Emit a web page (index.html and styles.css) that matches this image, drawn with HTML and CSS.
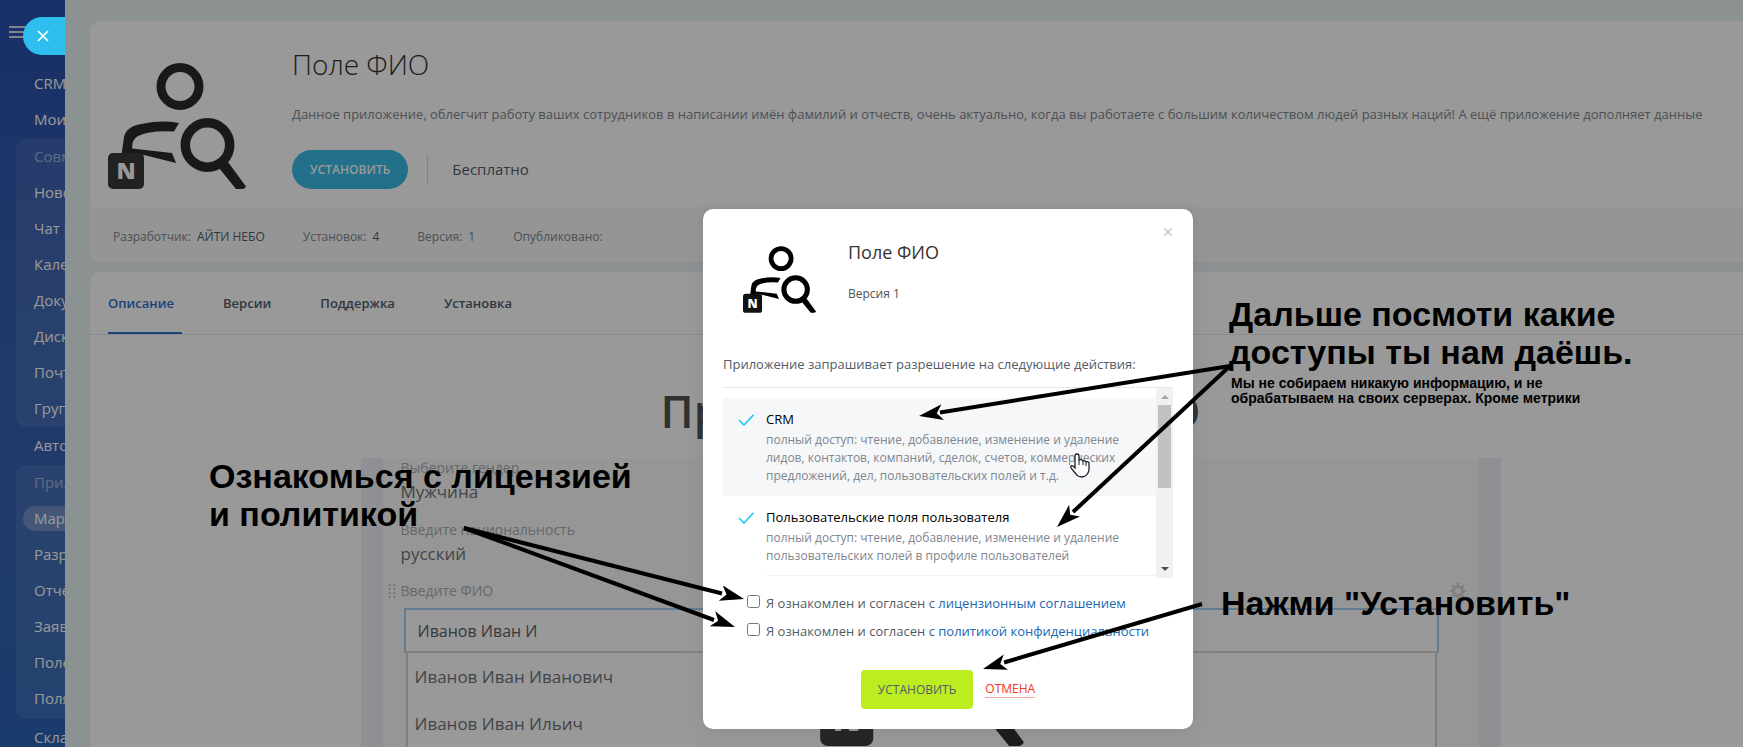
FILE: index.html
```html
<!DOCTYPE html>
<html lang="ru">
<head>
  <meta charset="UTF-8">
  <meta name="viewport" content="width=device-width, initial-scale=1.0">
  <title>Поле ФИО</title>
  <link rel="stylesheet" href="styles.css">
</head>
<body>

  <!-- Shared app logo -->
  <svg class="defs" width="0" height="0" aria-hidden="true">
    <symbol id="app-logo" viewBox="0 0 138 126">
      <circle cx="72" cy="23.5" r="19" fill="none" stroke="#000" stroke-width="9"/>
      <path d="M71 60Q53 57 36 60.500Q18 63 16 74L13.500 92H36L68 100L64 90L24 85.500Q24 76 30 73Q42 67 66 68.500Z"/>
      <circle cx="99.500" cy="82" r="22.200" fill="none" stroke="#000" stroke-width="9.500"/>
      <path d="M111 105L120 99L138 123.500Q137 126 134 126H128Z"/>
      <rect y="90" width="36" height="36" rx="5" fill="#121212"/>
      <text x="18" y="116" text-anchor="middle" fill="#fff" class="logo-letter">N</text>
    </symbol>
  </svg>

  <div class="page">
    <aside class="sidebar">
      <button class="burger" type="button" aria-label="Меню"><span></span><span></span><span></span></button>
      <nav class="menu">
        <a href="#">CRM</a>
        <a href="#">Мои</a>
        <div class="menu-group">
          <a href="#" class="muted">Совм</a>
          <a href="#">Ново</a>
          <a href="#">Чат и</a>
          <a href="#">Кале</a>
          <a href="#">Доку</a>
          <a href="#">Диск</a>
          <a href="#">Почт</a>
          <a href="#">Груп</a>
        </div>
        <a href="#">Авто</a>
        <div class="menu-group">
          <a href="#" class="muted">Прил</a>
          <a href="#" class="current"><span>Марк</span></a>
          <a href="#">Разр</a>
          <a href="#">Отче</a>
          <a href="#">Заяв</a>
          <a href="#">Поле</a>
          <a href="#">Поля</a>
        </div>
        <a href="#">Скла</a>
      </nav>
    </aside>

    <main class="slider">
      <section class="card">
        <div class="app">
          <svg class="app-logo"><use href="#app-logo"/></svg>
          <div class="app-info">
            <h1>Поле ФИО</h1>
            <p class="app-text">Данное приложение, облегчит работу ваших сотрудников в написании имён фамилий и отчеств, очень актуально, когда вы работаете с большим количеством людей разных наций! А ещё приложение дополняет данные</p>
            <div class="app-actions">
              <button class="btn-install" type="button">УСТАНОВИТЬ</button>
              <span class="price">Бесплатно</span>
            </div>
          </div>
        </div>
        <dl class="app-meta">
          <div><dt>Разработчик:</dt><dd>АЙТИ НЕБО</dd></div>
          <div><dt>Установок:</dt><dd>4</dd></div>
          <div class="plain"><dt>Версия:</dt><dd>1</dd></div>
          <div><dt>Опубликовано:</dt></div>
        </dl>
      </section>

      <section class="card card-tabs">
        <nav class="tabs">
          <a href="#" class="current">Описание</a>
          <a href="#">Версии</a>
          <a href="#">Поддержка</a>
          <a href="#">Установка</a>
        </nav>
        <div class="description">
          <h2>Приложение Поле ФИО</h2>
          <div class="demo">
            <label class="demo-label" for="gender">Выберите гендер</label>
            <output class="demo-value" id="gender">Мужчина</output>
            <label class="demo-label" for="nation">Введите национальность</label>
            <output class="demo-value" id="nation">русский</output>
            <div class="demo-head">
              <svg class="drag" viewBox="0 0 10 18"><path d="M1 1h2M7 1h2M1 6h2M7 6h2M1 11h2M7 11h2M1 16h2M7 16h2" stroke="#b4b8bf" stroke-width="2"/></svg>
              <label class="demo-label" for="fio">Введите ФИО</label>
              <svg class="gear" viewBox="0 0 16 16"><circle cx="8" cy="8" r="4.500" fill="none" stroke="#d6d6d6" stroke-width="3"/><path d="M8 0v3M8 13v3M0 8h3M13 8h3M2.300 2.300l2 2M11.700 11.700l2 2M2.300 13.700l2-2M11.700 4.300l2-2" stroke="#d6d6d6" stroke-width="2.500"/></svg>
            </div>
            <input class="demo-input" id="fio" type="text" value="Иванов Иван И">
            <ul class="demo-list">
              <li>Иванов Иван Иванович</li>
              <li>Иванов Иван Ильич</li>
            </ul>
            <svg class="demo-logo"><use href="#app-logo"/></svg>
          </div>
        </div>
      </section>
    </main>
  </div>

  <div class="overlay">
    <div class="modal" role="dialog" aria-labelledby="modal-title">
      <button class="modal-close" type="button" aria-label="Закрыть">
        <svg viewBox="0 0 8 8"><path d="M.5.5l7 7M7.500.5l-7 7" stroke="#c3c6c9" stroke-width="1.500"/></svg>
      </button>
      <header class="modal-head">
        <svg class="modal-logo"><use href="#app-logo"/></svg>
        <div>
          <h3 id="modal-title">Поле ФИО</h3>
          <p>Версия 1</p>
        </div>
      </header>
      <p class="modal-lead">Приложение запрашивает разрешение на следующие действия:</p>
      <div class="rights">
        <ul>
          <li class="active">
            <svg class="check" viewBox="0 0 16 12"><path d="M1 6l5 5L15.500.8" fill="none" stroke="#2fc6f6" stroke-width="1.700"/></svg>
            <div>
              <h4>CRM</h4>
              <p>полный доступ: чтение, добавление, изменение и удаление лидов, контактов, компаний, сделок, счетов, коммерческих предложений, дел, пользовательских полей и т.д.</p>
            </div>
          </li>
          <li>
            <svg class="check" viewBox="0 0 16 12"><path d="M1 6l5 5L15.500.8" fill="none" stroke="#2fc6f6" stroke-width="1.700"/></svg>
            <div>
              <h4>Пользовательские поля пользователя</h4>
              <p>полный доступ: чтение, добавление, изменение и удаление пользовательских полей в профиле пользователей</p>
            </div>
          </li>
        </ul>
        <div class="scrollbar">
          <i class="arrow-up"></i>
          <i class="thumb"></i>
          <i class="arrow-down"></i>
        </div>
      </div>
      <form class="agree">
        <div class="agree-row">
          <input type="checkbox" id="license">
          <label for="license">Я ознакомлен и согласен с <a href="#">лицензионным соглашением</a></label>
        </div>
        <div class="agree-row">
          <input type="checkbox" id="policy">
          <label for="policy">Я ознакомлен и согласен с <a href="#">политикой конфиденциальности</a></label>
        </div>
        <div class="modal-actions">
          <button class="btn-accept" type="button">УСТАНОВИТЬ</button>
          <a href="#" class="btn-cancel">ОТМЕНА</a>
        </div>
      </form>
    </div>
  </div>

  <button class="slider-close" type="button" aria-label="Закрыть">
    <svg viewBox="0 0 12 12"><path d="M1 1l10 10M11 1L1 11" stroke="#fff" stroke-width="1.700"/></svg>
  </button>

  <!-- Notes and arrows over the page -->
  <div class="notes">
    <p class="note note-license">Ознакомься с лицензией<br>и политикой</p>
    <div class="note note-rights">
      <p>Дальше посмоти какие<br>доступы ты нам даёшь.</p>
      <p class="note-small">Мы не собираем никакую информацию, и не<br>обрабатываем на своих серверах. Кроме метрики</p>
    </div>
    <p class="note note-install">Нажми "Установить"</p>
    <svg class="arrows" width="1743" height="747" viewBox="0 0 1743 747" aria-hidden="true">
      <path d="M1077 454q-2 0-2 2v12l-2-2q-3-1-2 2l5 6q2 3 6 3 6-1 7-7v-7q-1-2-3-1-1-2-3-1-1-2-4-1v-4q0-2-2-2z" fill="#fff" stroke="#1d1d2b" stroke-width="1.300"/>
      <path d="M1079 460v5M1083 461v4M1086 462v4" stroke="#1d1d2b"/>
      <defs>
        <marker id="head" markerUnits="userSpaceOnUse" markerWidth="26" markerHeight="18" refX="24" refY="8" orient="auto">
          <path d="M24 8L0 0L6 8L0 16Z"/>
        </marker>
      </defs>
      <g fill="none" stroke="#000" stroke-width="4">
        <path d="M1230 366L940 412.500"/>
        <path d="M1230 366L1073 512"/>
        <path d="M464 528L722 593.500"/>
        <path d="M464 528L714 620"/>
        <path d="M1202 604L1004 662.500"/>
      </g>
      <g fill="none" stroke="none" marker-end="url(#head)">
        <path d="M1230 366L919 416"/>
        <path d="M1230 366L1057 527"/>
        <path d="M464 528L744 599"/>
        <path d="M464 528L735 627"/>
        <path d="M1202 604L983 669"/>
      </g>
    </svg>
  </div>

</body>
</html>
```

FILE: styles.css
```css
:root {
  --blue: #2067b0;
  --text: #333;
  --muted: #80868e;
  --font: "Open Sans", "Noto Sans", sans-serif;
}

* {
  box-sizing: border-box;
}

body {
  margin: 0;
  height: 100vh;
  overflow: hidden;
  position: relative;
  font-family: var(--font);
  font-size: 13px;
  color: var(--text);
}

h1, h2, h3, h4, p, ul, dl, dd {
  margin: 0;
  padding: 0;
}

ul {
  list-style: none;
}

a {
  text-decoration: none;
}

button {
  font-family: inherit;
  border: none;
  padding: 0;
}

.defs {
  position: absolute;
}

.logo-letter {
  font-family: "Open Sans", sans-serif;
  font-size: 23px;
  font-weight: 800;
}

.page {
  display: flex;
  height: 100%;
}

/* Left menu */
.sidebar {
  flex: 0 0 65px;
  overflow: hidden;
  background: linear-gradient(180deg, #2a50ad 0%, #3560af 45%, #3662b2 70%, #2b63b4 100%);
}

.burger {
  display: flex;
  flex-direction: column;
  gap: 3px;
  width: 24px;
  height: 66px;
  margin-left: 9px;
  padding-top: 26px;
  background: none;
}

.burger span {
  width: 24px;
  height: 2px;
  background: #d3dcee;
}

.menu a {
  display: flex;
  align-items: center;
  height: 36px;
  padding-left: 34px;
  padding-bottom: 2px;
  font-size: 15px;
  white-space: nowrap;
  color: #fff;
}

.menu-group {
  margin: 1px 0 1px 16px;
  border-radius: 10px 0 0 10px;
  background: rgba(255, 255, 255, 0.08);
}

.menu-group:last-of-type {
  padding-bottom: 2px;
}

.menu-group a {
  padding-left: 18px;
}

.menu a.muted {
  color: rgba(255, 255, 255, 0.5);
}

.menu .current {
  padding-left: 7px;
}

.menu .current span {
  flex: 1;
  padding-left: 11px;
  line-height: 25px;
  border-radius: 13px 0 0 13px;
  background: rgba(255, 255, 255, 0.25);
}

/* Slider content */
.slider {
  flex: 1;
  min-width: 0;
  display: flex;
  flex-direction: column;
  gap: 10px;
  padding: 21px 0 0 25px;
  background: #e9f2f4;
}

.card {
  border-radius: 10px 0 0 10px;
  background: #fff;
  overflow: hidden;
}

.app {
  display: flex;
  gap: 46px;
  height: 186px;
  padding: 28px 0 0 18px;
}

.app-logo {
  flex: none;
  width: 138px;
  height: 126px;
  margin-top: 14px;
  opacity: 0.83;
}

.app-info h1 {
  margin-top: -1px;
  font-size: 28px;
  line-height: 32px;
  font-weight: 300;
}

.app-text {
  margin-top: 24px;
  font-size: 13px;
  line-height: 20px;
  color: var(--muted);
  white-space: nowrap;
}

.app-actions {
  display: flex;
  align-items: center;
  margin-top: 26px;
}

.btn-install {
  height: 39px;
  padding: 0 18px;
  border-radius: 20px;
  background: #39bbe5;
  color: #fff;
  font-size: 12px;
  font-weight: 600;
}

.price {
  margin-left: 19px;
  padding-left: 24px;
  border-left: 1px solid #d9dcdf;
  font-size: 15px;
  line-height: 29px;
  color: #525c69;
}

.app-meta {
  display: flex;
  gap: 38px;
  height: 55px;
  align-items: center;
  padding: 4px 0 0 23px;
  background: #f8f9f9;
  font-size: 12px;
  color: var(--muted);
}

.app-meta div {
  display: flex;
  gap: 6px;
}

.app-meta dd {
  color: #525c69;
}

.app-meta .plain dd {
  color: inherit;
}

.card-tabs {
  flex: 1;
  display: flex;
  flex-direction: column;
  border-radius: 10px 0 0 0;
}

.tabs {
  display: flex;
  gap: 41px;
  padding-left: 18px;
  border-bottom: 1px solid #e6e8ea;
}

.tabs a {
  padding: 2px 8px 0 0;
  border-bottom: 2px solid transparent;
  font-size: 13px;
  font-weight: 600;
  line-height: 58px;
  color: #525c69;
}

.tabs .current {
  color: #2f6ecd;
  border-bottom-color: #2f6ecd;
}

.description {
  flex: 1;
  display: flex;
  flex-direction: column;
  align-items: center;
  padding-left: 28px;
}

.description h2 {
  margin: 44px 0 15px;
  font-size: 45px;
  font-weight: 600;
  line-height: 64px;
  color: #525252;
}

.demo {
  position: relative;
  flex: 1;
  display: flex;
  flex-direction: column;
  width: 1140px;
  padding: 0 18px;
  border: solid #eef0f5;
  border-width: 0 22px;
  background: #fafafa;
  font-size: 17px;
}

.demo-label {
  line-height: 20px;
  font-size: 14px;
  color: #a9adb3;
}

.demo-value {
  margin: 2px 0 16px;
  line-height: 24px;
  color: #6f7378;
}

.demo-head {
  display: flex;
  align-items: center;
  gap: 5px;
  margin: 0 -5px 8px -13px;
  height: 18px;
}

.drag {
  width: 8px;
  height: 17px;
}

.gear {
  width: 16px;
  height: 16px;
  margin-left: auto;
}

.demo-input {
  height: 45px;
  margin: 0 22px 0 3px;
  padding: 0 12px;
  border: 2px solid #a3cdf0;
  border-bottom-color: #d6d6d6;
  background: #fff;
  font-family: inherit;
  font-size: 16px;
  color: #5e6166;
}

.demo-list {
  flex: 1;
  margin: 0 24px 0 5px;
  padding: 0 7px;
  border: solid #d6d6d6;
  border-width: 0 2px;
  background: #fff;
  line-height: 47px;
  color: #6f7378;
}

.demo-logo {
  position: absolute;
  left: 437px;
  bottom: 1px;
  width: 204px;
  height: 186px;
  opacity: 0.83;
}

/* Install popup */
.overlay {
  position: absolute;
  inset: 0;
  display: flex;
  justify-content: center;
  align-items: flex-start;
  padding: 209px 0 0 153px;
  background: rgba(0, 0, 0, 0.4);
}

.modal {
  position: relative;
  width: 490px;
  padding: 37px 20px 20px;
  border-radius: 10px;
  background: #fff;
  box-shadow: 0 7px 21px rgba(83, 92, 105, 0.12), 0 -1px 6px rgba(83, 92, 105, 0.06);
}

.modal-close {
  position: absolute;
  top: 15px;
  right: 17px;
  width: 16px;
  height: 16px;
  display: grid;
  place-items: center;
  background: none;
}

.modal-close svg {
  width: 8px;
  height: 8px;
}

.modal-head {
  display: flex;
  gap: 32px;
  height: 108px;
  padding-left: 20px;
}

.modal-logo {
  width: 73px;
  height: 67px;
}

.modal-head h3 {
  margin-top: -6px;
  font-size: 18px;
  font-weight: 500;
  line-height: 24px;
}

.modal-head p {
  margin-top: 21px;
  font-size: 12px;
  line-height: 18px;
  color: #525252;
}

.modal-lead {
  line-height: 20px;
  padding-bottom: 13px;
  border-bottom: 1px solid #e6e8ea;
  color: #525c69;
}

.rights {
  display: flex;
  height: 190px;
}

.rights ul {
  flex: 1;
  padding-top: 10px;
}

.rights li {
  display: flex;
  gap: 12px;
  padding: 11px 0 0 15px;
}

.rights li.active {
  background: #f5f7f9;
}

.rights li > div {
  flex: 1;
  padding-bottom: 10px;
  padding-right: 24px;
  border-bottom: 1px solid #f1f2f4;
}

.check {
  flex: none;
  width: 16px;
  height: 12px;
  margin-top: 5px;
}

.rights h4 {
  font-size: 13px;
  font-weight: 500;
  line-height: 20px;
  color: #000;
}

.rights p {
  margin-top: 2px;
  font-size: 12px;
  line-height: 18px;
  color: var(--muted);
}

.scrollbar {
  flex: 0 0 17px;
  display: flex;
  flex-direction: column;
  align-items: center;
  background: #f1f1f1;
}

.arrow-up,
.arrow-down {
  border: 4px solid transparent;
}

.arrow-up {
  border-top-width: 0;
  border-bottom-color: #a3a3a3;
  margin: 7px 0 6px;
}

.arrow-down {
  border-bottom-width: 0;
  border-top-color: #505050;
  margin: auto 0 7px;
}

.thumb {
  width: 13px;
  height: 83px;
  background: #c1c1c1;
}

.agree {
  padding-top: 11px;
}

.agree-row {
  display: flex;
  align-items: center;
  gap: 6px;
  height: 28px;
  padding-left: 24px;
  white-space: nowrap;
  color: #525c69;
}

.agree-row input {
  width: 13px;
  height: 13px;
  margin: 0 0 4px;
}

.agree-row a {
  color: var(--blue);
}

.modal-actions {
  display: flex;
  justify-content: center;
  gap: 12px;
  margin-top: 25px;
}

.btn-accept {
  height: 39px;
  padding: 0 17px;
  border-radius: 4px;
  background: #bbed21;
  font-size: 12px;
  color: #535c69;
}

.btn-cancel {
  align-self: center;
  line-height: 16px;
  border-bottom: 1px solid #f7a79c;
  font-size: 12px;
  color: #f1361a;
}

.slider-close {
  position: absolute;
  top: 17px;
  left: 23px;
  display: flex;
  align-items: center;
  width: 42px;
  height: 38px;
  padding-left: 14px;
  border-radius: 19px 0 0 19px;
  background: #2fbfef;
}

.slider-close svg {
  width: 12px;
  height: 12px;
}

/* Notes */
.notes {
  position: absolute;
  inset: 0;
  overflow: hidden;
  pointer-events: none;
}

.note {
  position: absolute;
  font-family: "Liberation Sans", Arial, sans-serif;
  font-size: 34px;
  font-weight: bold;
  line-height: 38px;
  color: #000;
  white-space: nowrap;
}

.note-license {
  left: 209px;
  top: 457px;
}

.note-rights {
  left: 1229px;
  top: 295px;
}

.note-small {
  margin: 5px 0 0 2px;
  font-size: 14px;
  line-height: 15px;
}

.note-install {
  left: 1221px;
  top: 584px;
}

.arrows {
  position: absolute;
  left: 0;
  top: 0;
}
```
